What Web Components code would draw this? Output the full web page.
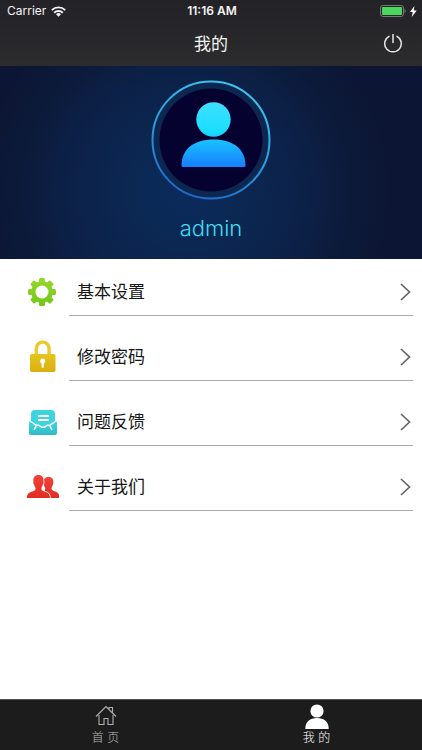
<!DOCTYPE html>
<html lang="zh-CN">
<head>
<meta charset="utf-8">
<meta name="viewport" content="width=device-width, initial-scale=1">
<title>我的</title>
<style>
html, body { margin: 0; height: 100%; background: #fff; }
body { font-family: Inter, "Noto Sans CJK SC", sans-serif; }
</style>
</head>
<body>
<my-page></my-page>
<script>
const define = (name, markup) => {
  const template = document.createElement('template');
  template.innerHTML = markup;
  customElements.define(name, class extends HTMLElement {
    constructor() {
      super();
      this.attachShadow({ mode: 'open' }).append(template.content.cloneNode(true));
    }
  });
};

define('status-bar', `
<style>
:host { display: grid; grid-template-columns: 1fr auto 1fr; align-items: center; height: 22px; padding: 0 5px 0 7px; color: #f4f4f4; font-size: 12px; line-height: 16px; }
.left, .right { display: flex; align-items: center; }
.left { gap: 5px; }
.right { justify-content: flex-end; gap: 4px; }
.time { font-weight: 600; }
svg { display: block; }
</style>
<div class="left"><span>Carrier</span>
<svg width="15" height="11" viewBox="0 0 15 11" fill="none" stroke="#f4f4f4" stroke-width="1.9"><path d="M.8 4.1a9.6 9.6 0 0 1 13.4 0M3.2 6.7a6.2 6.2 0 0 1 8.6 0"/><path d="M7.5 10.8 5 8.3a3.5 3.5 0 0 1 5 0z" fill="#f4f4f4" stroke="none"/></svg></div>
<span class="time">11:16 AM</span>
<div class="right">
<svg width="26" height="12" viewBox="0 0 26 12"><rect x=".5" y=".5" width="23" height="11" rx="2.5" fill="none" stroke="#77777b"/><rect x="2" y="2" width="20" height="8" rx="1" fill="#4bd75b"/><path d="M24.5 4q1.3.6 1.3 2t-1.3 2z" fill="#77777b"/></svg>
<svg width="7" height="11" viewBox="0 0 7 11"><path d="M4.4 0 0 6.1h2.7L1.8 11 6.7 4.5H3.8z" fill="#fff"/></svg>
</div>`);

define('nav-bar', `
<style>
:host { display: grid; grid-template-columns: 1fr auto 1fr; align-items: center; height: 44px; padding: 0 19px; color: #f2f2f2; }
h1 { grid-column: 2; margin: 0; font-size: 17px; line-height: 24px; font-weight: 400; }
button { justify-self: end; padding: 0; border: 0; background: none; cursor: pointer; }
svg { display: block; }
</style>
<h1><slot></slot></h1>
<button type="button" aria-label="退出"><svg width="20" height="20" viewBox="0 0 20 20" fill="none" stroke="#e6e6e8" stroke-width="1.5" stroke-linecap="round"><path d="M10 .5v8M6 2.300a8.300 8.300 0 1 0 8 0"/></svg></button>`);

define('profile-card', `
<style>
:host { display: flex; flex-direction: column; align-items: center; box-sizing: border-box; height: 193px; padding-top: 14px; background: radial-gradient(ellipse 215px 215px at 44% 65%, #0b2b5c 0%, #0b2853 25%, #0c2148 55%, #0c1938 80%, #0c1533 100%); }
h2 { margin: 12px 0 0; font-size: 22px; line-height: 32px; font-weight: 300; color: #42dcf2; }
svg { display: block; }
</style>
<svg width="120" height="120" viewBox="0 0 120 120" aria-hidden="true">
<defs>
<linearGradient id="ring" x1=".7" y1="0" x2=".3" y2="1"><stop stop-color="#3fc5f2"/><stop offset=".5" stop-color="#2c9fe2"/><stop offset="1" stop-color="#1d69cf"/></linearGradient>
<linearGradient id="person" gradientUnits="userSpaceOnUse" x1="0" y1="22" x2="0" y2="87"><stop stop-color="#40deff"/><stop offset=".45" stop-color="#19deff"/><stop offset=".65" stop-color="#18b7ff"/><stop offset="1" stop-color="#187eff"/></linearGradient>
</defs>
<circle cx="60" cy="60" r="58.500" fill="#0c2851" stroke="url(#ring)" stroke-width="2"/>
<circle cx="60" cy="60" r="51.500" fill="#06022f"/>
<g fill="url(#person)"><circle cx="62.500" cy="39.500" r="17.200"/><path d="M30.500 85.500C30.500 69 43 59.500 62.500 59.500S94.500 69 94.500 85.500Q94.500 87 93 87H32Q30.500 87 30.500 85.500z"/></g>
</svg>
<h2><slot></slot></h2>`);

define('menu-row', `
<style>
:host { display: block; }
a { display: flex; gap: 11px; height: 50px; padding: 0 9px 0 26px; color: #161616; text-decoration: none; font-size: 17px; line-height: 24px; }
.icon { display: block; width: 32px; height: 50px; }
.body { display: flex; flex: 1; align-items: center; justify-content: space-between; padding: 2px 2px 0 8px; border-bottom: 1px solid #aaa; }
</style>
<a href="#"><span class="icon"><slot name="icon"></slot></span>
<span class="body"><slot></slot>
<svg width="11" height="18" viewBox="0 0 11 18" fill="none" stroke="#666" stroke-width="1.700" aria-hidden="true"><path d="M1 1 9.500 9 1 17"/></svg></span></a>`);

define('tab-item', `
<style>
:host { flex: 1; display: block; color: #bababa; }
:host([active]) { color: #fff; }
a { display: flex; flex-direction: column; align-items: center; padding-top: 4px; color: inherit; text-decoration: none; font-size: 12px; line-height: 18px; font-weight: 300; }
.icon { height: 25px; }
</style>
<a href="#"><span class="icon"><slot name="icon"></slot></span><slot></slot></a>`);

define('tab-bar', `
<style>
:host { display: flex; box-sizing: border-box; height: 51px; border-top: 1px solid #555; background: #1c1c1c; }
</style>
<slot></slot>`);

define('my-page', `
<style>
:host { display: flex; flex-direction: column; min-height: 100vh; }
header { background: linear-gradient(#222227, #2c2c2e); }
main { flex: 1; }
nav { display: flex; flex-direction: column; gap: 15px; padding-top: 7px; }
svg { display: block; overflow: visible; }
</style>
<header><status-bar></status-bar><nav-bar>我的</nav-bar></header>
<main>
<profile-card>admin</profile-card>
<nav>
<menu-row>基本设置<svg slot="icon" width="32" height="50" viewBox="0 0 32 50">
<defs><linearGradient id="green" x1="0" y1="0" x2="0" y2="1"><stop stop-color="#96da2b"/><stop offset="1" stop-color="#72c41a"/></linearGradient>
<mask id="hole" maskUnits="userSpaceOnUse" x="0" y="10" width="32" height="32"><g fill="#fff"><circle cx="16" cy="26" r="10.800"/><g id="teeth"><rect x="13" y="12" width="6" height="28" rx="1.500"/><rect x="2" y="23" width="28" height="6" rx="1.500"/></g><use href="#teeth" transform="rotate(45 16 26)"/></g><circle cx="16" cy="26" r="6.500" fill="#000"/></mask></defs>
<rect y="10" width="32" height="32" fill="url(#green)" mask="url(#hole)"/></svg></menu-row>
<menu-row>修改密码<svg slot="icon" width="32" height="50" viewBox="0 0 32 50">
<defs><linearGradient id="gold" x1="0" y1="0" x2="0" y2="1"><stop stop-color="#e6c51d"/><stop offset="1" stop-color="#dbae10"/></linearGradient></defs>
<path d="M10.300 24v-6.500a6.400 6.400 0 0 1 12.800 0V24" fill="none" stroke="#edc72c" stroke-width="3.400"/><rect x="4" y="23" width="25.500" height="18" rx="1.800" fill="url(#gold)"/><path d="M16.700 27.500a2.700 2.700 0 0 1 1.300 5l-.3 4.200h-2l-.3-4.200a2.700 2.700 0 0 1 1.300-5z" fill="#fff"/></svg></menu-row>
<menu-row>问题反馈<svg slot="icon" width="32" height="50" viewBox="0 0 32 50">
<defs><linearGradient id="teal" x1="0" y1="0" x2="0" y2="1"><stop stop-color="#3fd9e4"/><stop offset="1" stop-color="#2fb9c6"/></linearGradient></defs>
<path d="M9 14h16q4 0 4 4v8l-7 4.500H12L5 26v-8q0-4 4-4z" fill="#3bd4df"/><path d="M3 26.500q0-1.700 1.500-.8L12 30h10l7.500-4.300q1.500-.9 1.500.8V37q0 2-2 2H5q-2 0-2-2z" fill="url(#teal)"/><path d="M4 25 10 29.200h2.500l3 2h3l3-2H24l6-4.200M10.500 29.400 8 34M23.500 29.400l2.500 4.600" fill="none" stroke="#fff" stroke-width="1.500" stroke-linejoin="round"/><path d="M12 20h11M12 24h11" stroke="#fff" stroke-width="1.800"/></svg></menu-row>
<menu-row>关于我们<svg slot="icon" width="32" height="50" viewBox="0 0 32 50">
<defs><linearGradient id="red" x1="0" y1="0" x2="0" y2="1"><stop stop-color="#f34238"/><stop offset="1" stop-color="#e12c22"/></linearGradient></defs>
<path d="M22.500 16c4 0 5.200 2.700 4.800 6-.3 2.500-1.300 3.300-1.700 4.700-.2 1.500.2 2.300 1.700 3 3 1.300 5.700 1.700 5.700 4.800V37H19V28.500c.4-.5.200-1.500-.3-2.500-.8-1.500-1.200-3-1.200-5 0-3.200 1.700-5 5-5z" fill="url(#red)"/>
<path d="M12.500 14c3.800 0 5.300 2.400 5 6-.1 1 .4 1.300 0 2.600-.3 1-.8 1-1 1.800-.3 1.300-1 1.900-1 3 0 1.900 1 2.300 3 3.100 3.800 1.500 5.500 2.200 5.500 6.500H1c0-4.300 1.500-5 5.300-6.500 2.200-.9 3.300-1.300 3.300-3.100 0-1.200-1-1.700-1.200-3-.1-.8-.7-.8-1-1.800-.3-1.300.2-1.600 0-2.600-.3-3.600 1.300-6 5.100-6z" fill="url(#red)" stroke="#fff" stroke-width="1.600" paint-order="stroke"/><path d="M0 37h34v2H0z" fill="#fff"/></svg></menu-row>
</nav>
</main>
<tab-bar>
<tab-item>首 页<svg slot="icon" width="22" height="25" viewBox="0 0 22 25" fill="none" stroke="#b0b0b0" stroke-width="1.100"><path d="M1 12.500 11 2.500l10 10M4 11v9.500h5v-6h4v6h5V11M14 5V3.500h3.500v5"/></svg></tab-item>
<tab-item active>我 的<svg slot="icon" width="24" height="25" viewBox="0 0 24 25" fill="#fff"><circle cx="12" cy="7" r="6.600"/><path d="M.3 25C.3 17.500 5 14 12 14s11.700 3.500 11.700 11z"/></svg></tab-item>
</tab-bar>`);
</script>
</body>
</html>
